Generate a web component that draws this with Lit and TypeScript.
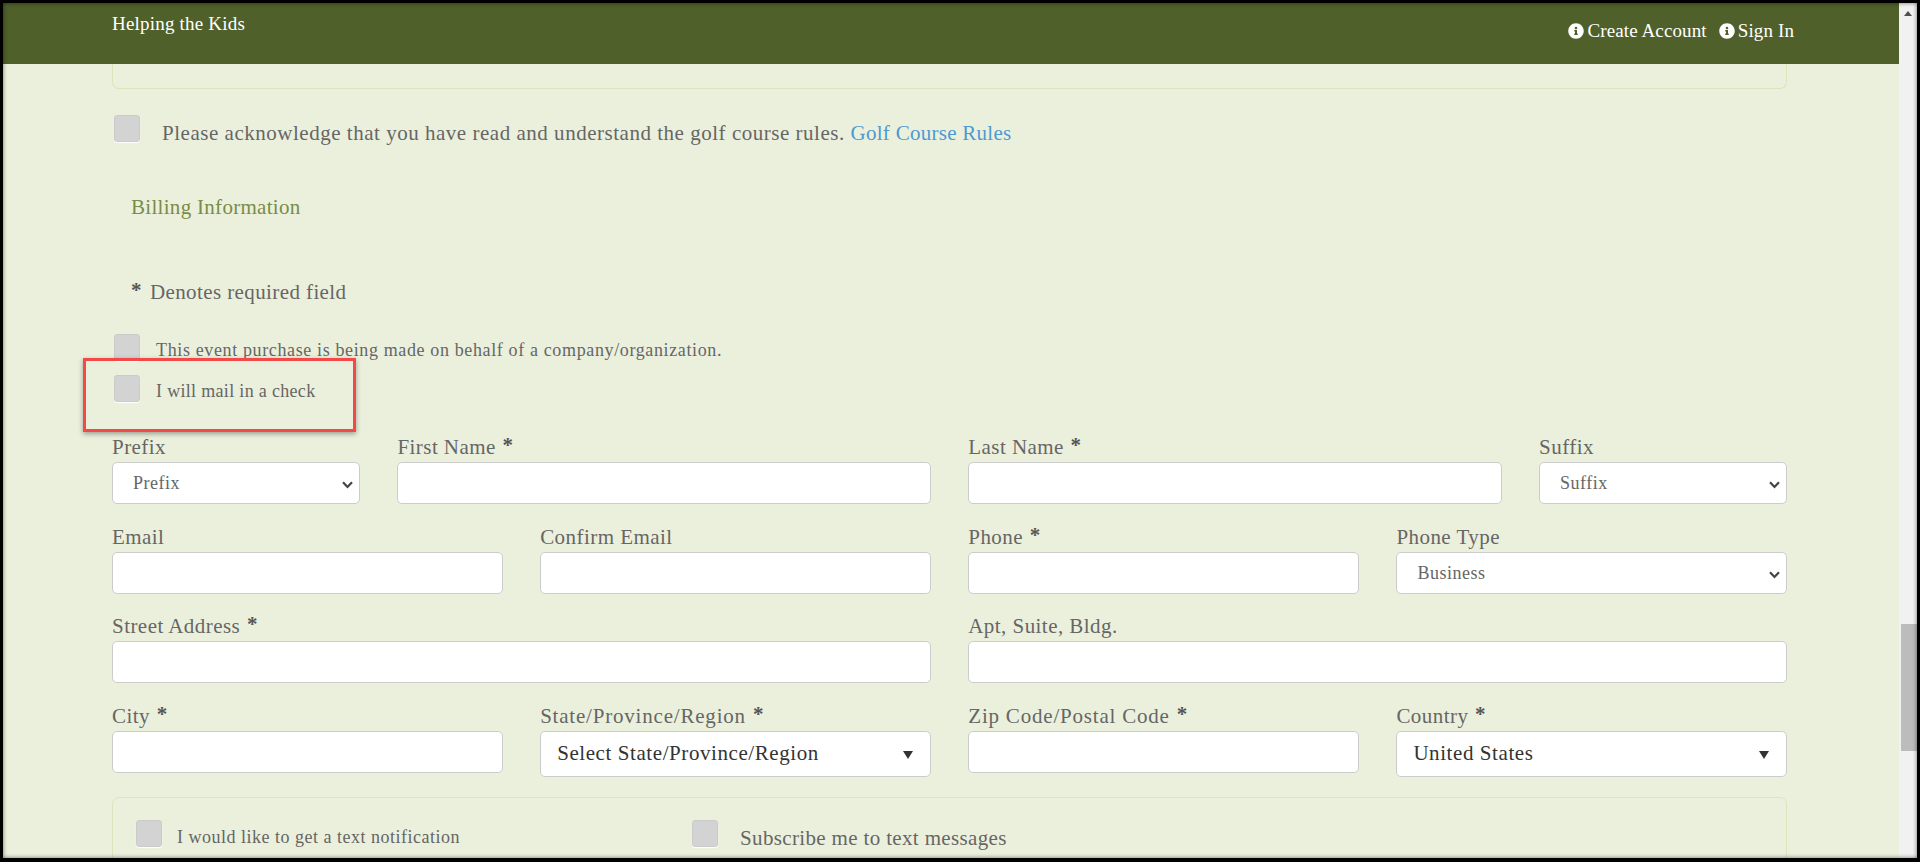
import { LitElement, html, css, svg } from "lit";
import { customElement } from "lit/decorators.js";

const info = svg`<svg class="ic" viewBox="0 0 512 512" width="16" height="16"><path fill="#fff" d="M256 8C119.043 8 8 119.083 8 256c0 136.997 111.043 248 248 248s248-111.003 248-248C504 119.083 392.957 8 256 8zm0 110c23.196 0 42 18.804 42 42s-18.804 42-42 42-42-18.804-42-42 18.804-42 42-42zm56 254c0 6.627-5.373 12-12 12h-88c-6.627 0-12-5.373-12-12v-24c0-6.627 5.373-12 12-12h12v-64h-12c-6.627 0-12-5.373-12-12v-24c0-6.627 5.373-12 12-12h64c6.627 0 12 5.373 12 12v100h12c6.627 0 12 5.373 12 12v24z"/></svg>`;

const chevron = svg`<svg class="chev" viewBox="0 0 11 8" width="11" height="8"><path d="M1 1.2 5.5 6 10 1.2" fill="none" stroke="#444" stroke-width="2.2"/></svg>`;

@customElement("app-root")
export class AppRoot extends LitElement {
  static styles = css`
    :host { display: block; width: 1920px; height: 862px; overflow: hidden; position: relative; background: #000; font-family: "Liberation Serif", "Times New Roman", serif; color: #666; }
    * { box-sizing: border-box; }
    .frame { position: absolute; inset: 3px 3px 4px 3px; display: flex; overflow: hidden; }
    .shade { position: absolute; inset: 3px 3px 4px 3px; pointer-events: none; box-shadow: inset 0 0 4px rgba(0,0,0,.55); }
    .main { width: 1896px; flex: none; background: #ebf0dc; display: flex; flex-direction: column; overflow: hidden; }
    .bar { flex: none; height: 61px; background: #50602a; color: #fff; display: flex; justify-content: space-between; padding: 0 105px 0 109px; }
    .brand { font-size: 19px; letter-spacing: .2px; line-height: 42px; }
    .nav { display: flex; gap: 12px; padding-top: 17px; font-size: 19px; letter-spacing: .12px; line-height: 22px; }
    .nav a { display: flex; align-items: center; gap: 3px; height: 22px; }
    .ic { flex: none; }
    .body { padding: 0 112px 0 109px; }
    .tail { height: 25px; border: 1px solid #dbe4bc; border-top: 0; border-radius: 0 0 7px 7px; }
    .cb { appearance: none; flex: none; margin: 0; display: block; width: 26px; height: 27px; background: #d3d3d3; border: 1px solid #cbcbcb; border-radius: 3px; box-shadow: 0 1px 1px #fff; }
    .row { display: flex; align-items: flex-start; }
    .ack { margin: 26px 0 0 2px; gap: 22px; font-size: 21px; letter-spacing: .52px; }
    .ack span { margin-top: 5px; line-height: 27px; }
    .ack a { color: #4d9ad2; letter-spacing: .27px; }
    .billing { margin: 45px 0 0 19px; font-size: 21px; letter-spacing: .3px; line-height: 30px; color: #7a8c46; }
    .req { margin: 55px 0 0 19px; display: flex; gap: 8px; font-size: 21px; letter-spacing: .4px; line-height: 30px; }
    .star { color: #555; font-weight: 700; margin-left: 1px; position: relative; top: -2px; }
    .req .star { margin-left: 0; }
    .opt { margin-left: 2px; gap: 16px; font-size: 18px; }
    .opt span { line-height: 27px; }
    .o1 { margin-top: 27px; letter-spacing: .63px; }
    .o1 span { margin-top: 3px; }
    .o2 { margin-top: 11px; letter-spacing: .32px; }
    .o2 span { margin-top: 3px; }
    .grid { margin-top: 30px; display: grid; grid-template-columns: repeat(12, 1fr); column-gap: 37.5px; row-gap: 20.67px; align-items: start; }
    .s2 { grid-column: span 2; } .s3 { grid-column: span 3; } .s4 { grid-column: span 4; } .s6 { grid-column: span 6; }
    label { display: block; height: 27px; font-size: 21px; letter-spacing: .45px; line-height: 24px; white-space: nowrap; }
    label.wide { letter-spacing: .8px; }
    .c { display: block; width: 100%; height: 42px; background: #fff; border: 1px solid #ccc; border-radius: 5px; }
    .pick { position: relative; }
    select.c { appearance: none; font-family: inherit; font-size: 18px; letter-spacing: .5px; color: #666; padding-left: 20px; }
    .chev { position: absolute; right: 7px; bottom: 15px; pointer-events: none; }
    .chosen { height: 46px; display: flex; align-items: center; justify-content: space-between; padding: 0 17px 0 16px; font-size: 21px; letter-spacing: .58px; color: #333; }
    .tri { width: 0; height: 0; border: 5px solid transparent; border-top: 8px solid #333; border-bottom: 0; margin-top: 3px; }
    .panel { margin-top: 20px; height: 120px; border: 1px solid #dbe4bc; border-radius: 7px; padding: 22px 23px 0; display: flex; }
    .p1 { width: 556px; gap: 15px; font-size: 18px; letter-spacing: .5px; }
    .p1 span { margin-top: 4px; line-height: 27px; }
    .p2 { gap: 22px; font-size: 21px; letter-spacing: .35px; }
    .p2 span { margin-top: 5px; line-height: 27px; }
    .sb { flex: 1; background: #f1f1f1; display: flex; flex-direction: column; align-items: center; }
    .up { margin-top: 8px; width: 0; height: 0; border: 4px solid transparent; border-bottom: 5px solid #505050; border-top: 0; }
    .thumb { margin-top: 608px; align-self: flex-end; width: 16px; height: 127px; background: #bcbcbc; }
    .mark { position: absolute; left: 83px; top: 358px; width: 273px; height: 74px; border: 3px solid #f44949; box-shadow: 0 2px 5px rgba(0,0,0,.35); pointer-events: none; }
  `;

  private ctl(text: string) {
    return html`<div class="pick"><select class="c"><option>${text}</option></select>${chevron}</div>`;
  }

  render() {
    const star = html` <b class="star">*</b>`;
    return html`
      <div class="frame">
        <div class="main">
          <header class="bar">
            <div class="brand">Helping the Kids</div>
            <nav class="nav"><a>${info}Create Account</a><a>${info}Sign In</a></nav>
          </header>
          <div class="body">
            <div class="tail"></div>
            <div class="row ack"><input class="cb" type="checkbox" /><span>Please acknowledge that you have read and understand the golf course rules. <a>Golf Course Rules</a></span></div>
            <div class="billing">Billing Information</div>
            <div class="req"><b class="star">*</b><span>Denotes required field</span></div>
            <div class="row opt o1"><input class="cb" type="checkbox" /><span>This event purchase is being made on behalf of a company/organization.</span></div>
            <div class="row opt o2"><input class="cb" type="checkbox" /><span>I will mail in a check</span></div>
            <div class="grid">
              <div class="s2"><label>Prefix</label>${this.ctl("Prefix")}</div>
              <div class="s4"><label>First Name${star}</label><input class="c" /></div>
              <div class="s4"><label>Last Name${star}</label><input class="c" /></div>
              <div class="s2"><label>Suffix</label>${this.ctl("Suffix")}</div>
              <div class="s3"><label>Email</label><input class="c" /></div>
              <div class="s3"><label>Confirm Email</label><input class="c" /></div>
              <div class="s3"><label>Phone${star}</label><input class="c" /></div>
              <div class="s3"><label>Phone Type</label>${this.ctl("Business")}</div>
              <div class="s6"><label>Street Address${star}</label><input class="c" /></div>
              <div class="s6"><label>Apt, Suite, Bldg.</label><input class="c" /></div>
              <div class="s3"><label>City${star}</label><input class="c" /></div>
              <div class="s3"><label class="wide">State/Province/Region${star}</label><div class="c chosen"><span>Select State/Province/Region</span><i class="tri"></i></div></div>
              <div class="s3"><label class="wide">Zip Code/Postal Code${star}</label><input class="c" /></div>
              <div class="s3"><label>Country${star}</label><div class="c chosen"><span>United States</span><i class="tri"></i></div></div>
            </div>
            <div class="panel">
              <div class="row p1"><input class="cb" type="checkbox" /><span>I would like to get a text notification</span></div>
              <div class="row p2"><input class="cb" type="checkbox" /><span>Subscribe me to text messages</span></div>
            </div>
          </div>
        </div>
        <div class="sb"><i class="up"></i><div class="thumb"></div></div>
      </div>
      <div class="shade"></div>
      <div class="mark"></div>
    `;
  }
}
